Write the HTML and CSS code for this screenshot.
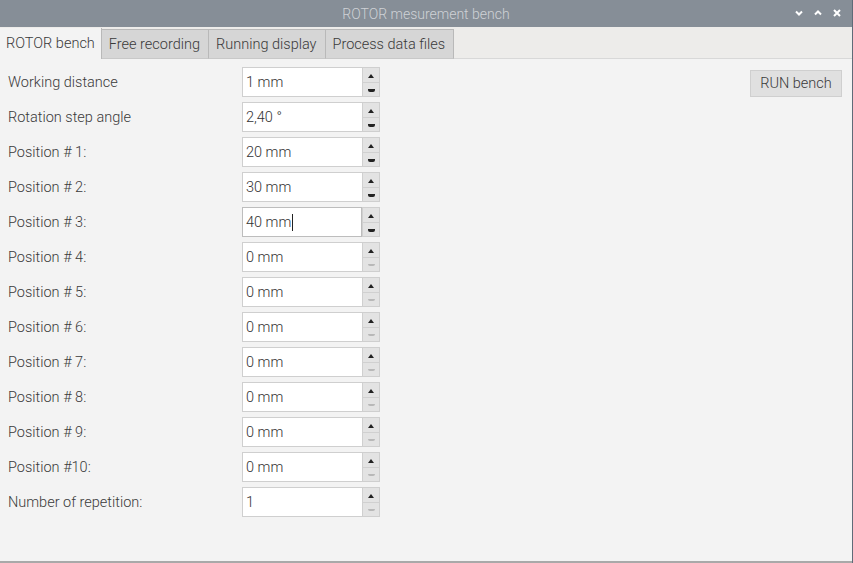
FILE: index.html
```html
<!DOCTYPE html>
<html>
<head>
<meta charset="utf-8">
<link rel="stylesheet" href="styles.css">
</head>
<body>
<div class="window">
  <div class="titlebar">
    <span class="title">ROTOR mesurement bench</span>
    <div class="controls">
      <svg width="10" height="10" viewBox="0 0 10 10"><path d="M2 3.5 L5 6.5 L8 3.5" fill="none" stroke="#fff" stroke-width="2"/></svg>
      <svg width="10" height="10" viewBox="0 0 10 10"><path d="M2 6.5 L5 3.5 L8 6.5" fill="none" stroke="#fff" stroke-width="2"/></svg>
      <svg width="10" height="10" viewBox="0 0 10 10"><path d="M2 2 L8 8 M8 2 L2 8" fill="none" stroke="#fff" stroke-width="2"/></svg>
    </div>
  </div>
  <div class="tabbar">
    <div class="tab active">ROTOR bench</div>
    <div class="tab">Free recording</div>
    <div class="tab">Running display</div>
    <div class="tab">Process data files</div>
  </div>
  <div class="content">
    <div class="form">
      <div class="row"><span class="label">Working distance</span><div class="spin"><div class="field">1 mm</div><div class="btns"><span class="up"></span><span class="down"></span></div></div></div>
      <div class="row"><span class="label">Rotation step angle</span><div class="spin"><div class="field">2,40 °</div><div class="btns"><span class="up"></span><span class="down"></span></div></div></div>
      <div class="row"><span class="label">Position # 1:</span><div class="spin"><div class="field">20 mm</div><div class="btns"><span class="up"></span><span class="down"></span></div></div></div>
      <div class="row"><span class="label">Position # 2:</span><div class="spin"><div class="field">30 mm</div><div class="btns"><span class="up"></span><span class="down"></span></div></div></div>
      <div class="row"><span class="label">Position # 3:</span><div class="spin"><div class="field focus">40 mm<span class="caret"></span></div><div class="btns"><span class="up"></span><span class="down"></span></div></div></div>
      <div class="row"><span class="label">Position # 4:</span><div class="spin"><div class="field">0 mm</div><div class="btns"><span class="up"></span><span class="down off"></span></div></div></div>
      <div class="row"><span class="label">Position # 5:</span><div class="spin"><div class="field">0 mm</div><div class="btns"><span class="up"></span><span class="down off"></span></div></div></div>
      <div class="row"><span class="label">Position # 6:</span><div class="spin"><div class="field">0 mm</div><div class="btns"><span class="up"></span><span class="down off"></span></div></div></div>
      <div class="row"><span class="label">Position # 7:</span><div class="spin"><div class="field">0 mm</div><div class="btns"><span class="up"></span><span class="down off"></span></div></div></div>
      <div class="row"><span class="label">Position # 8:</span><div class="spin"><div class="field">0 mm</div><div class="btns"><span class="up"></span><span class="down off"></span></div></div></div>
      <div class="row"><span class="label">Position # 9:</span><div class="spin"><div class="field">0 mm</div><div class="btns"><span class="up"></span><span class="down off"></span></div></div></div>
      <div class="row"><span class="label">Position #10:</span><div class="spin"><div class="field">0 mm</div><div class="btns"><span class="up"></span><span class="down off"></span></div></div></div>
      <div class="row"><span class="label">Number of repetition:</span><div class="spin"><div class="field">1</div><div class="btns"><span class="up"></span><span class="down off"></span></div></div></div>
    </div>
    <div class="side">
      <div class="button">RUN bench</div>
    </div>
  </div>
</div>
</body>
</html>
```
FILE: styles.css
```css
* { box-sizing: border-box; }
html, body { margin: 0; padding: 0; }
body {
  width: 853px; height: 563px; overflow: hidden;
  font-family: Roboto, "Liberation Sans", sans-serif;
  font-size: 14.5px; font-weight: 300; color: #3a3a3a;
  background: #f3f3f3;
}
.window {
  width: 853px; height: 563px;
  display: flex; flex-direction: column;
  border-right: 1px solid #5f6b78;
}
.titlebar {
  height: 27px; flex: none;
  background: #868e97;
  display: flex; align-items: center; justify-content: center;
  position: relative;
}
.title { color: #cfd2d6; font-size: 14px; padding-top: 1px; }
.controls {
  position: absolute; right: 10px; top: 8px;
  display: flex; gap: 9px;
}
.controls svg { display: block; }
.tabbar {
  height: 32px; flex: none;
  background: #edecea;
  display: flex; align-items: flex-end;
  border-bottom: 1px solid #d8d8d8;
  padding-top: 1px;
}
.tab {
  height: 30px; padding: 0 8px 0 7px;
  display: flex; align-items: center;
  background: #d6d6d6; color: #3a3a3a;
  border: 1px solid #b9b9b9; border-left: none;
  margin-bottom: -1px;
  border-bottom: 1px solid #c8c8c8;
}
.tab.active {
  background: #f3f3f3; height: 31px; border: none;
  padding: 0 6px 0 6px; margin-bottom: -1px;
  border-right: 1px solid #b9b9b9;
}
.content {
  flex: 1; display: flex; justify-content: space-between;
  background: #f3f3f3;
  border-bottom: 2px solid #a9a9a9;
  padding: 8px 10px 0 8px;
}
.form { display: flex; flex-direction: column; gap: 5px; }
.row { display: flex; align-items: center; height: 30px; }
.label { width: 234px; }
.spin {
  display: flex; width: 138px; height: 30px;
  border: 1px solid #cfcfcf; background: #fff;
}
.field { flex: 1; display: flex; align-items: center; padding-left: 3px; color: #333; background: #fff; }
.field.focus { border: 1px solid #bdbdbd; margin: -1px 0 -1px -1px; padding-left: 3px; }
.caret { display: inline-block; width: 1px; height: 17px; background: #222; margin-left: 1px; }
.btns {
  width: 17px; display: flex; flex-direction: column;
  background: #e3e3e3; border-left: 1px solid #d0d0d0;
}
.btns span { flex: 1; position: relative; }
.btns .up { border-bottom: 1px solid #d0d0d0; }
.btns .up::after {
  content: ""; position: absolute; left: 5px; top: 6px;
  width: 0; height: 0;
  border-left: 3.5px solid transparent; border-right: 3.5px solid transparent;
  border-bottom: 4px solid #222;
}
.btns .down::after {
  content: ""; position: absolute; left: 5px; top: 6px;
  width: 7px; height: 3px; background: #222;
  border-radius: 0 0 2px 2px;
}
.btns .down.off::after { background: #b8b8b8; height: 2px; }
.side { padding-top: 3px; }
.button {
  width: 92px; height: 27px;
  background: #e0e0e0; border: 1px solid #cfcfcf;
  display: flex; align-items: center; justify-content: center;
}
```
